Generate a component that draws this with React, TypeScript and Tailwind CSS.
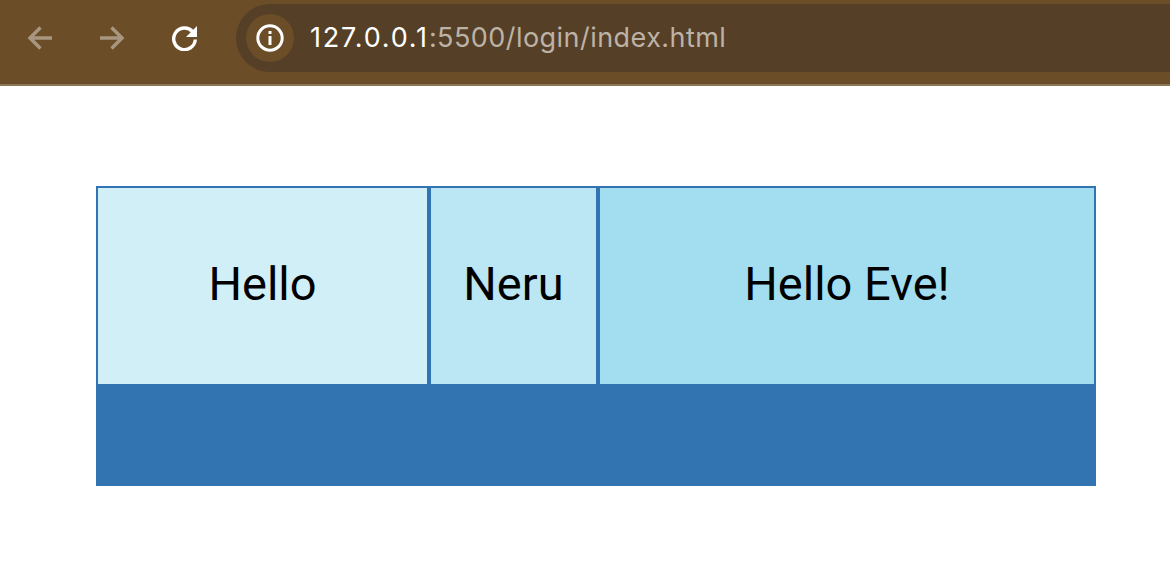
export default function App() {
  return (
    <div className="w-[1170px] h-[574px] bg-white overflow-hidden flex flex-col">
      <div className="h-[86px] shrink-0 bg-[#6b4d28] border-b-2 border-[#8b7557] flex items-start">
        <div className="flex w-[236px] h-[76px] shrink-0 pl-[28px] items-center">
          <svg width="24" height="24" viewBox="0 0 24 24" fill="none" stroke="#a89680" strokeWidth="3.400" className="mr-[48px]">
            <path d="M24 12H2.500M12.500 1.500 2 12 12.500 22.500" />
          </svg>
          <svg width="24" height="24" viewBox="0 0 24 24" fill="none" stroke="#a89680" strokeWidth="3.400" className="mr-[48px]">
            <path d="M0 12h21.500M11.500 1.500 22 12 11.500 22.500" />
          </svg>
          <svg width="26" height="26" viewBox="0 0 26 26" fill="none" stroke="#ffffff" strokeWidth="3.400">
            <path d="M20.500 6.500A10.800 10.800 0 1 0 23.300 14.500" />
            <path d="M25 1v11H14z" fill="#ffffff" stroke="none" />
          </svg>
        </div>
        <div className="h-[68px] mt-[4px] flex-1 rounded-l-[34px] bg-[#553f27] flex items-center pl-[10px]">
          <div className="w-[48px] h-[48px] rounded-full bg-[#6b4d28] flex items-center justify-center shrink-0">
            <svg width="28" height="28" viewBox="0 0 28 28" fill="none">
              <circle cx="14" cy="14" r="12.200" stroke="#ffffff" strokeWidth="3" />
              <rect x="12.500" y="12" width="3" height="9" fill="#ffffff" />
              <rect x="12.500" y="7" width="3" height="3" fill="#ffffff" />
            </svg>
          </div>
          <div className="ml-[16px] text-[27px] tracking-[0.45px] font-['Inter',sans-serif] text-[#bcb2a6] whitespace-nowrap">
            <span className="text-white tracking-[1.8px]">127.0.0.1</span>:5500/login/index.html
          </div>
        </div>
      </div>
      <div className="w-[1000px] h-[300px] ml-[96px] mt-[100px] bg-[#3274b1] border-2 border-[#3274b1] font-['Roboto',sans-serif] text-[47px] text-black">
        <div className="h-[196px] flex gap-[4px]">
          <div className="w-[329px] bg-[#d1eff7] flex items-center justify-center pb-[3px]">Hello</div>
          <div className="w-[165px] bg-[#bbe6f3] flex items-center justify-center pb-[3px]">Neru</div>
          <div className="flex-1 bg-[#a2deef] flex items-center justify-center pb-[3px]">Hello Eve!</div>
        </div>
      </div>
    </div>
  );
}
